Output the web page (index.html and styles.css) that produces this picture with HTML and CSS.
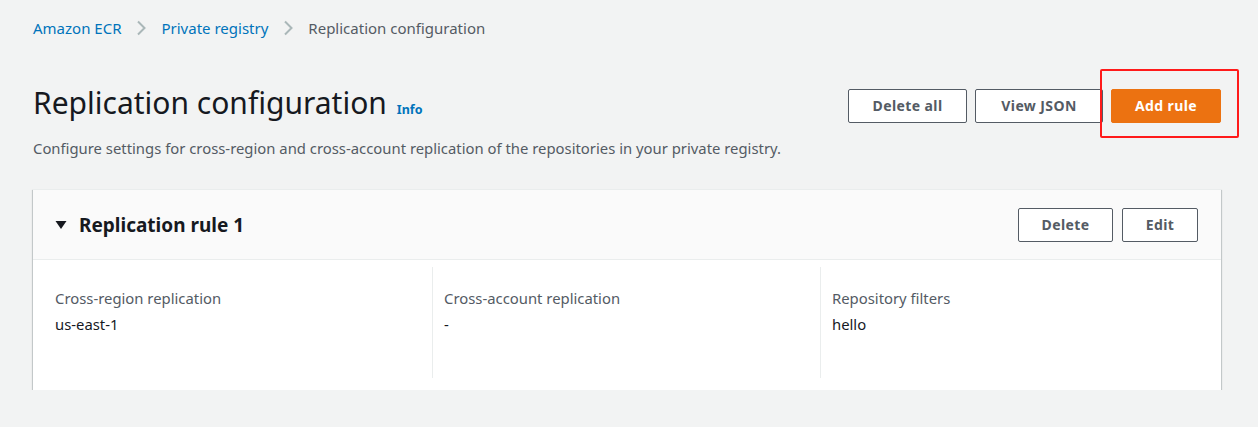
FILE: index.html
```html
<!DOCTYPE html>
<html lang="en">
<head>
<meta charset="utf-8">
<title>Replication configuration</title>
<link rel="stylesheet" href="styles.css">
</head>
<body>
<div class="page">
  <nav class="crumbs">
    <a class="crumb-link" href="#">Amazon ECR</a>
    <svg class="chev" width="10" height="16" viewBox="0 0 10 16"><path d="M2 1.5 L8.5 8 L2 14.5" fill="none" stroke="#aab7b8" stroke-width="2"/></svg>
    <a class="crumb-link" href="#">Private registry</a>
    <svg class="chev" width="10" height="16" viewBox="0 0 10 16"><path d="M2 1.5 L8.5 8 L2 14.5" fill="none" stroke="#aab7b8" stroke-width="2"/></svg>
    <span class="crumb-current">Replication configuration</span>
  </nav>

  <header class="page-head">
    <div class="head-text">
      <div class="title-row">
        <h1 class="title">Replication configuration</h1>
        <a class="info" href="#">Info</a>
      </div>
      <p class="desc">Configure settings for cross-region and cross-account replication of the repositories in your private registry.</p>
    </div>
    <div class="actions">
      <button class="btn btn-delall">Delete all</button>
      <button class="btn btn-json">View JSON</button>
      <span class="highlight">
        <button class="btn btn-primary">Add rule</button>
      </span>
    </div>
  </header>

  <section class="card">
    <div class="card-head">
      <div class="card-title">
        <svg class="caret" width="12" height="10" viewBox="0 0 12 10"><path d="M0.5 1 H11.5 L6 9 Z" fill="#16191f"/></svg>
        <h2>Replication rule 1</h2>
      </div>
      <div class="card-actions">
        <button class="btn btn-delete">Delete</button>
        <button class="btn btn-edit">Edit</button>
      </div>
    </div>
    <div class="card-body">
      <div class="col">
        <div class="label">Cross-region replication</div>
        <div class="value">us-east-1</div>
      </div>
      <div class="col col-div">
        <div class="label">Cross-account replication</div>
        <div class="value">-</div>
      </div>
      <div class="col col-div">
        <div class="label">Repository filters</div>
        <div class="value">hello</div>
      </div>
    </div>
  </section>
</div>
</body>
</html>
```

FILE: styles.css
```css
* { box-sizing: border-box; }
html, body { margin: 0; padding: 0; }
body {
  background: #f2f3f3;
  font-family: "Noto Sans", "Open Sans", Arial, sans-serif;
  color: #16191f;
  font-size: 14.85px;
  line-height: 22px;
}
.page {
  padding: 17px 37px 0 33px;
}
.crumbs {
  display: flex;
  align-items: center;
  height: 22px;
  font-size: 15px;
}
.crumb-link {
  color: #0073bb;
  text-decoration: none;
}
.crumb-current { color: #545b64; }
.chev { margin: 0 15px; display: block; }

.page-head {
  display: flex;
  justify-content: space-between;
  margin-top: 46px;
}
.title-row {
  display: flex;
  align-items: baseline;
}
.title {
  margin: 0;
  font-size: 30px;
  line-height: 36px;
  font-weight: 400;
  color: #16191f;
}
.info {
  margin-left: 10px;
  font-size: 12.5px;
  font-weight: 700;
  color: #0073bb;
  text-decoration: none;
}
.desc {
  margin: 16px 0 0;
  color: #545b64;
}
.actions {
  display: flex;
  align-items: flex-start;
  gap: 8px;
  padding-top: 4px;
}
.btn {
  font-family: inherit;
  font-size: 14px;
  font-weight: 700;
  line-height: 22px;
  height: 34px;
  padding: 5px 0;
  border: 1px solid #545b64;
  border-radius: 2px;
  background: #fff;
  color: #545b64;
  letter-spacing: 0.4px;
  text-align: center;
}
.btn-delall { width: 119px; }
.btn-json { width: 128px; }
.btn-primary {
  background: #ec7211;
  border-color: #ec7211;
  color: #fff;
  width: 110px;
}
.highlight {
  position: relative;
  display: block;
}
.highlight::after {
  content: "";
  position: absolute;
  left: -11px;
  top: -20px;
  right: -18px;
  bottom: -15px;
  border: 2px solid #ff1a1a;
  border-radius: 2px;
  pointer-events: none;
}

.card {
  margin-top: 30px;
  background: #fff;
  box-shadow: 0 1px 1px 0 rgba(0,28,36,.3), 1px 1px 1px 0 rgba(0,28,36,.15), -1px 1px 1px 0 rgba(0,28,36,.15);
  border-top: 1px solid #eaeded;
}
.card-head {
  display: flex;
  align-items: center;
  justify-content: space-between;
  height: 70px;
  padding: 0 23px 0 22px;
  background: #fafafa;
  border-bottom: 1px solid #eaeded;
}
.card-title {
  display: flex;
  align-items: center;
  gap: 12px;
}
.card-title h2 {
  margin: 0;
  font-size: 19px;
  line-height: 28px;
  font-weight: 700;
  color: #16191f;
}
.card-actions {
  display: flex;
  gap: 9px;
}
.btn-delete { width: 95px; }
.btn-edit { width: 76px; }

.card-body {
  display: grid;
  grid-template-columns: 377px 388px 1fr;
  padding: 7px 22px 12px;
}
.col {
  min-height: 111px;
  padding-top: 20px;
}
.col-div {
  border-left: 1px solid #eaeded;
  padding-left: 11px;
}
.label { color: #545b64; }
.value { margin-top: 4px; color: #16191f; }
```
